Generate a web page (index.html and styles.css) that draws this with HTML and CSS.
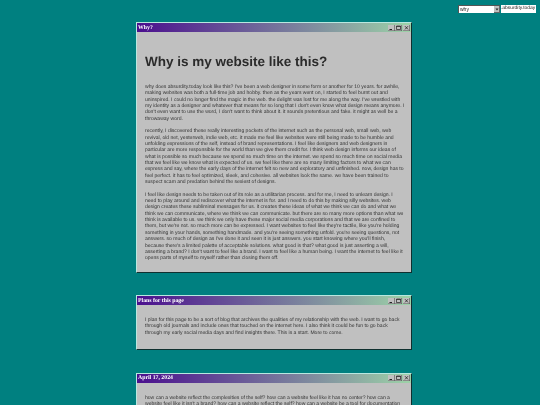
FILE: index.html
```html
<!DOCTYPE html>
<html lang="en">
<head>
    <meta charset="UTF-8">
    <meta name="viewport" content="width=device-width, initial-scale=1.0">
    <title>Why?</title>
    <link rel="stylesheet" href="styles.css">
</head>
<body>
    <div class="top-bar">
        <div class="select-wrap">
            <select class="page-select">
                <option>why</option>
            </select>
            <div class="select-arrow"><svg viewBox="0 0 6 7"><path d="M1.5 2.5h3L3 4.5z" fill="#222"/></svg></div>
        </div>
        <span class="site-name">.absurdity.today</span>
    </div>

    <div class="window">
        <div class="title-bar">
            <span class="title-text">Why?</span>
            <div class="title-buttons">
                <button class="title-button"><svg viewBox="0 0 7 6"><path d="M1.5 4.5h2.5" stroke="#222"/></svg></button>
                <button class="title-button"><svg viewBox="0 0 7 6"><path d="M1.5 1h4v3.5h-4zM1.5 1.5h4" fill="none" stroke="#222" stroke-width=".7"/></svg></button>
                <button class="title-button close"><svg viewBox="0 0 7 6"><path d="M2 1.2l3 3.2M5 1.2l-3 3.2" stroke="#222" stroke-width=".8"/></svg></button>
            </div>
        </div>
        <div class="window-body main-body">
            <h1>Why is my website like this?</h1>
            <p>why does absurdity.today look like this? I've been a web designer in some form or another for 10 years. for awhile, making websites was both a full-time job and hobby. then as the years went on, I started to feel burnt out and uninspired. I could no longer find the magic in the web. the delight was lost for me along the way. I've wrestled with my identity as a designer and whatever that means for so long that I don't even know what design means anymore. I don't even want to use the word, I don't want to think about it. it sounds pretentious and fake. it might as well be a throwaway word.</p>
            <p>recently, I discovered these really interesting pockets of the internet such as the personal web, small web, web revival, old net, yesterweb, indie web, etc. it made me feel like websites were still being made to be humble and unfolding expressions of the self, instead of brand representations. I feel like designers and web designers in particular are more responsible for the world than we give them credit for. I think web design informs our ideas of what is possible so much because we spend so much time on the internet. we spend so much time on social media that we feel like we know what is expected of us. we feel like there are so many limiting factors to what we can express and say, where the early days of the internet felt so new and exploratory and unfinished. now, design has to feel perfect. it has to feel optimized, sleek, and cohesive. all websites look the same. we have been trained to suspect scam and predation behind the sexiest of designs.</p>
            <p>I feel like design needs to be taken out of its role as a utilitarian process. and for me, I need to unlearn design. I need to play around and rediscover what the internet is for. and I need to do this by making silly websites. web design creates these subliminal messages for us. it creates these ideas of what we think we can do and what we think we can communicate, where we think we can communicate. but there are so many more options than what we think is available to us. we think we only have these major social media corporations and that we are confined to them, but we're not. so much more can be expressed. I want websites to feel like they're tactile, like you're holding something in your hands, something handmade. and you're seeing something unfold. you're seeing questions, not answers. so much of design as I've done it and seen it is just answers. you start knowing where you'll finish, because there's a limited palette of acceptable solutions. what good is that? what good is just asserting a will, asserting a brand? I don't want to feel like a brand. I want to feel like a human being. I want the internet to feel like it opens parts of myself to myself rather than closing them off.</p>
        </div>
    </div>

    <div class="window">
        <div class="title-bar">
            <span class="title-text">Plans for this page</span>
            <div class="title-buttons">
                <button class="title-button"><svg viewBox="0 0 7 6"><path d="M1.5 4.5h2.5" stroke="#222"/></svg></button>
                <button class="title-button"><svg viewBox="0 0 7 6"><path d="M1.5 1h4v3.5h-4zM1.5 1.5h4" fill="none" stroke="#222" stroke-width=".7"/></svg></button>
                <button class="title-button close"><svg viewBox="0 0 7 6"><path d="M2 1.2l3 3.2M5 1.2l-3 3.2" stroke="#222" stroke-width=".8"/></svg></button>
            </div>
        </div>
        <div class="window-body">
            <p>I plan for this page to be a sort of blog that archives the qualities of my relationship with the web. I want to go back through old journals and include ones that touched on the internet here. I also think it could be fun to go back through my early social media days and find insights there. This is a start. More to come.</p>
        </div>
    </div>

    <div class="window">
        <div class="title-bar">
            <span class="title-text">April 17, 2024</span>
            <div class="title-buttons">
                <button class="title-button"><svg viewBox="0 0 7 6"><path d="M1.5 4.5h2.5" stroke="#222"/></svg></button>
                <button class="title-button"><svg viewBox="0 0 7 6"><path d="M1.5 1h4v3.5h-4zM1.5 1.5h4" fill="none" stroke="#222" stroke-width=".7"/></svg></button>
                <button class="title-button close"><svg viewBox="0 0 7 6"><path d="M2 1.2l3 3.2M5 1.2l-3 3.2" stroke="#222" stroke-width=".8"/></svg></button>
            </div>
        </div>
        <div class="window-body">
            <p>how can a website reflect the complexities of the self? how can a website feel like it has no center? how can a website feel like it isn't a brand? how can a website reflect the self? how can a website be a tool for documentation</p>
        </div>
    </div>
</body>
</html>
```

FILE: styles.css
```css
html, body {
    height: 405px;
    overflow: hidden;
}

body {
    font-family: "Liberation Sans", Arial, sans-serif;
    background-color: #008080;
    margin: 0;
    padding: 5px 0 0;
    text-rendering: geometricPrecision;
    filter: blur(0.3px);
}

.top-bar {
    display: flex;
    justify-content: flex-end;
    align-items: center;
    height: 8px;
    margin-right: 4px;
    margin-bottom: 9px;
}

.select-wrap {
    display: flex;
    width: 42px;
    height: 8px;
    background-color: #fff;
    box-shadow: inset 1px 1px 0 #555;
}

.page-select {
    flex: 1;
    min-width: 0;
    height: 8px;
    padding: 0 0 0 2px;
    border: none;
    border-radius: 0;
    appearance: none;
    background: transparent;
    color: #222;
    font-family: inherit;
    font-size: 5px;
}

.select-arrow {
    width: 6px;
    height: 7px;
    margin-top: 1px;
    background-color: #c0c0c0;
    box-shadow: inset -1px -1px 0 #666;
}

.select-arrow svg {
    display: block;
    width: 6px;
    height: 7px;
}

.site-name {
    display: block;
    width: 35px;
    height: 8px;
    overflow: hidden;
    white-space: nowrap;
    background-color: #fff;
    color: #222;
    font-size: 4.9px;
    line-height: 8px;
    margin-left: 1px;
}

.window {
    width: 276px;
    margin-left: 136px;
    margin-bottom: 22.5px;
    box-sizing: border-box;
    background-color: #c0c0c0;
    border: 1px solid;
    border-color: #b8e8e0 #10302f #10302f #b8e8e0;
}

.title-bar {
    display: flex;
    justify-content: space-between;
    align-items: center;
    height: 9px;
    padding: 0 1px;
    background: linear-gradient(to right, #4b0f8e, #9dd3a8);
}

.title-text {
    color: #fff;
    font-family: "Liberation Serif", serif;
    font-size: 5.8px;
    font-weight: bold;
}

.title-buttons {
    display: flex;
}

.title-button {
    width: 7px;
    height: 6px;
    padding: 0;
    border: none;
    background-color: #c0c0c0;
    box-shadow: inset -0.6px -0.6px 0 #555;
}

.title-button svg {
    display: block;
    width: 7px;
    height: 6px;
}

.close {
    margin-left: 1px;
}

.window-body {
    padding: 12px 6px 13px 8px;
    color: #333;
    font-size: 5.06px;
    line-height: 6.35px;
}

.main-body {
    padding-bottom: 10px;
}

.window-body h1 {
    margin: 9px 0 14px;
    font-size: 13.5px;
    line-height: 17px;
    font-weight: bold;
    color: #2b2b2b;
}

.window-body p {
    margin: 0 0 6.3px;
}

.window-body p:last-child {
    margin-bottom: 0;
}
```
